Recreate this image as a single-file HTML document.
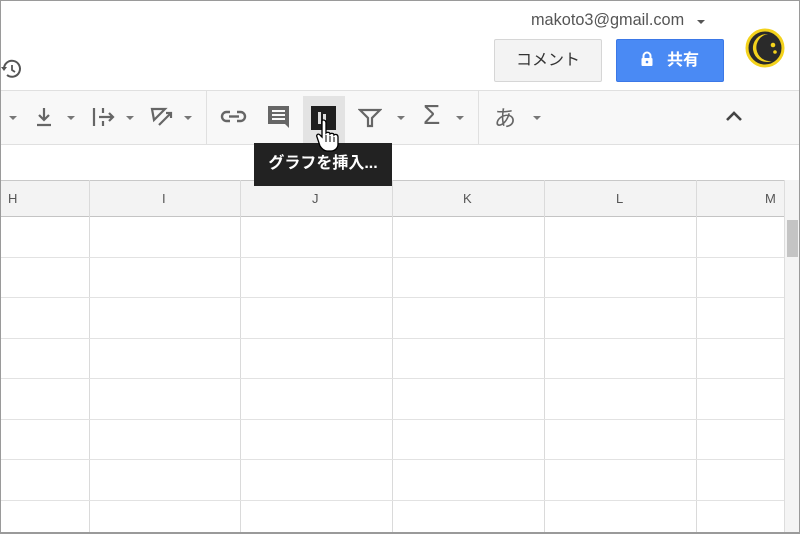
<!DOCTYPE html>
<html><head><meta charset="utf-8"><style>
*{box-sizing:border-box;margin:0;padding:0}
body{width:800px;height:534px;overflow:hidden;background:#fff;font-family:"Liberation Sans","Noto Sans CJK JP",sans-serif;position:relative}
.a{position:absolute}
.frame{left:0;top:0;width:800px;height:534px;border:1px solid #9a9a9a;border-bottom:2px solid #9a9a9a;pointer-events:none;z-index:10}
.tb{left:0;top:90px;width:800px;height:55px;background:#f8f8f8;border-top:1px solid #e0e0e0;border-bottom:1px solid #e0e0e0}
.hdr{left:0;top:180px;width:784px;height:37px;background:#f3f3f3;border-top:1px solid #c8c8c8;border-bottom:1px solid #c4c4c4}
.vl{width:1px;background:#dadada;top:180px;height:354px}
.hl{height:1px;background:#e2e2e2;left:0;width:784px}
.cl{font-size:13px;color:#555;top:191px}
.dd{width:0;height:0;border-left:4px solid transparent;border-right:4px solid transparent;border-top:4px solid #777}
</style></head><body>
<div class="a" style="left:531px;top:11px;font-size:16.3px;color:#555">makoto3@gmail.com</div>
<div class="a dd" style="left:697px;top:20px;border-top-color:#555"></div>
<div class="a" style="left:494px;top:39px;width:108px;height:43px;background:#f3f3f3;border:1px solid #d6d6d6;border-radius:2px;font-size:16px;color:#333;text-align:center;line-height:41px">コメント</div>
<div class="a" style="left:616px;top:39px;width:108px;height:43px;background:#4a8af4;border:1px solid #3b78e7;border-radius:2px;font-size:16px;font-weight:bold;color:#fff;line-height:41px;padding-left:50px">共有</div>
<svg class="a" style="left:640px;top:51px" width="14" height="16" viewBox="0 0 14 16"><path d="M3.5 7V5a3.5 3.5 0 0 1 7 0v2" stroke="#fff" stroke-width="2" fill="none"/><rect x="1.5" y="7" width="11" height="8" rx="1" fill="#fff"/><circle cx="7" cy="11" r="1.3" fill="#4a8af4"/></svg>
<svg class="a" style="left:744px;top:28px" width="42" height="40" viewBox="0 0 42 40"><circle cx="21" cy="20" r="18" fill="#2a2a2a" stroke="#f3d21c" stroke-width="3"/><path d="M24 6a14 14 0 1 0 4 27a13 13 0 0 1-4-27z" fill="#f3d21c"/><circle cx="29" cy="17" r="2.3" fill="#f3d21c"/><circle cx="31" cy="24" r="1.8" fill="#f3d21c"/></svg>
<svg class="a" style="left:0;top:58px" width="24" height="22" viewBox="0 0 24 22"><path d="M4 11a8 8 0 1 1 3 6" stroke="#555" stroke-width="2" fill="none"/><path d="M1 9l3 4 3-4z" fill="#555"/><path d="M12 7v5l3 2" stroke="#555" stroke-width="1.8" fill="none"/></svg>

<div class="a tb"></div>
<div class="a" style="left:206px;top:91px;width:1px;height:53px;background:#e0e0e0"></div>
<div class="a" style="left:478px;top:91px;width:1px;height:53px;background:#e0e0e0"></div>
<div class="a dd" style="left:9px;top:116px"></div>
<svg class="a" style="left:34px;top:106px" width="20" height="22" viewBox="0 0 20 22"><path d="M10 2v12M5 9l5 5 5-5M3 19h14" stroke="#666" stroke-width="2.2" fill="none"/></svg>
<div class="a dd" style="left:67px;top:116px"></div>
<svg class="a" style="left:91px;top:106px" width="26" height="22" viewBox="0 0 26 22"><path d="M3 2v18M12 2v5M12 15v5M8 11h14M18 7l4 4-4 4" stroke="#666" stroke-width="2.2" fill="none"/></svg>
<div class="a dd" style="left:126px;top:116px"></div>
<svg class="a" style="left:149px;top:106px" width="26" height="22" viewBox="0 0 26 22"><path d="M3 3h13L5 14zM10 19L22 7M17 7h5v5" stroke="#666" stroke-width="2.2" fill="none"/></svg>
<div class="a dd" style="left:184px;top:116px"></div>
<svg class="a" style="left:220px;top:107px" width="28" height="20" viewBox="0 0 28 20"><rect x="2" y="5" width="13" height="9" rx="4.5" stroke="#666" stroke-width="2.4" fill="none"/><rect x="12" y="5" width="13" height="9" rx="4.5" stroke="#666" stroke-width="2.4" fill="none"/><rect x="10" y="3" width="7" height="14" fill="#f8f8f8"/><path d="M9 9.5h10" stroke="#666" stroke-width="2.4"/></svg>
<svg class="a" style="left:266px;top:104px" width="26" height="28" viewBox="0 0 26 28"><path d="M2 2h21v22l-4-4H2z" fill="#666"/><path d="M6 7h13M6 11h13M6 15h13" stroke="#f8f8f8" stroke-width="2"/></svg>
<div class="a" style="left:303px;top:96px;width:42px;height:47px;background:#e3e3e3"></div>
<div class="a" style="left:311px;top:106px;width:25px;height:24px;background:#1e1e1e"></div>
<div class="a" style="left:318px;top:112px;width:3px;height:12px;background:#ddd"></div>
<div class="a" style="left:323px;top:114px;width:3px;height:8px;background:#ddd"></div>
<svg class="a" style="left:314px;top:118px;z-index:5" width="30" height="34" viewBox="0 0 30 34"><path d="M9 2c2 0 3 1 3 3v10c1-1 4-1 4 1c1-1 4-1 4 1c1-1 4-1 4 2v7c0 4-3 7-7 7h-4c-3 0-5-2-7-5L3 19c-1-2 1-4 3-2l2 2V5c0-2 0-3 1-3z" fill="#fff" stroke="#000" stroke-width="1.3"/><path d="M12 17v7M16 18v6M20 19v5" stroke="#000" stroke-width="1"/></svg>
<svg class="a" style="left:358px;top:107px" width="24" height="22" viewBox="0 0 24 22"><path d="M2 3h20l-8 8v8h-4v-8z" fill="none" stroke="#666" stroke-width="2.2"/></svg>
<div class="a dd" style="left:397px;top:116px"></div>
<div class="a" style="left:423px;top:99px;font-size:28px;color:#666">Σ</div>
<div class="a dd" style="left:456px;top:116px"></div>
<div class="a" style="left:494px;top:101px;font-size:22px;color:#666">あ</div>
<div class="a dd" style="left:533px;top:116px"></div>
<svg class="a" style="left:724px;top:109px" width="20" height="14" viewBox="0 0 20 14"><path d="M3 11l7-7 7 7" stroke="#444" stroke-width="2.6" fill="none"/></svg>

<div class="a" style="left:254px;top:143px;width:138px;height:43px;background:#222;color:#fff;font-size:16px;font-weight:bold;line-height:42px;text-align:center;z-index:4">グラフを挿入...</div>

<div class="a hdr"></div>
<div class="a cl" style="left:8px">H</div>
<div class="a cl" style="left:162px">I</div>
<div class="a cl" style="left:312px">J</div>
<div class="a cl" style="left:463px">K</div>
<div class="a cl" style="left:616px">L</div>
<div class="a cl" style="left:765px">M</div>
<div class="a vl" style="left:89px"></div>
<div class="a vl" style="left:240px"></div>
<div class="a vl" style="left:392px"></div>
<div class="a vl" style="left:544px"></div>
<div class="a vl" style="left:696px"></div>
<div class="a hl" style="top:257px"></div>
<div class="a hl" style="top:297px"></div>
<div class="a hl" style="top:338px"></div>
<div class="a hl" style="top:378px"></div>
<div class="a hl" style="top:419px"></div>
<div class="a hl" style="top:459px"></div>
<div class="a hl" style="top:500px"></div>
<div class="a" style="left:784px;top:180px;width:16px;height:354px;background:#f4f4f4;border-left:1px solid #ddd"></div>
<div class="a" style="left:787px;top:220px;width:11px;height:37px;background:#c4c4c4"></div>
<div class="a frame"></div>
</body></html>
